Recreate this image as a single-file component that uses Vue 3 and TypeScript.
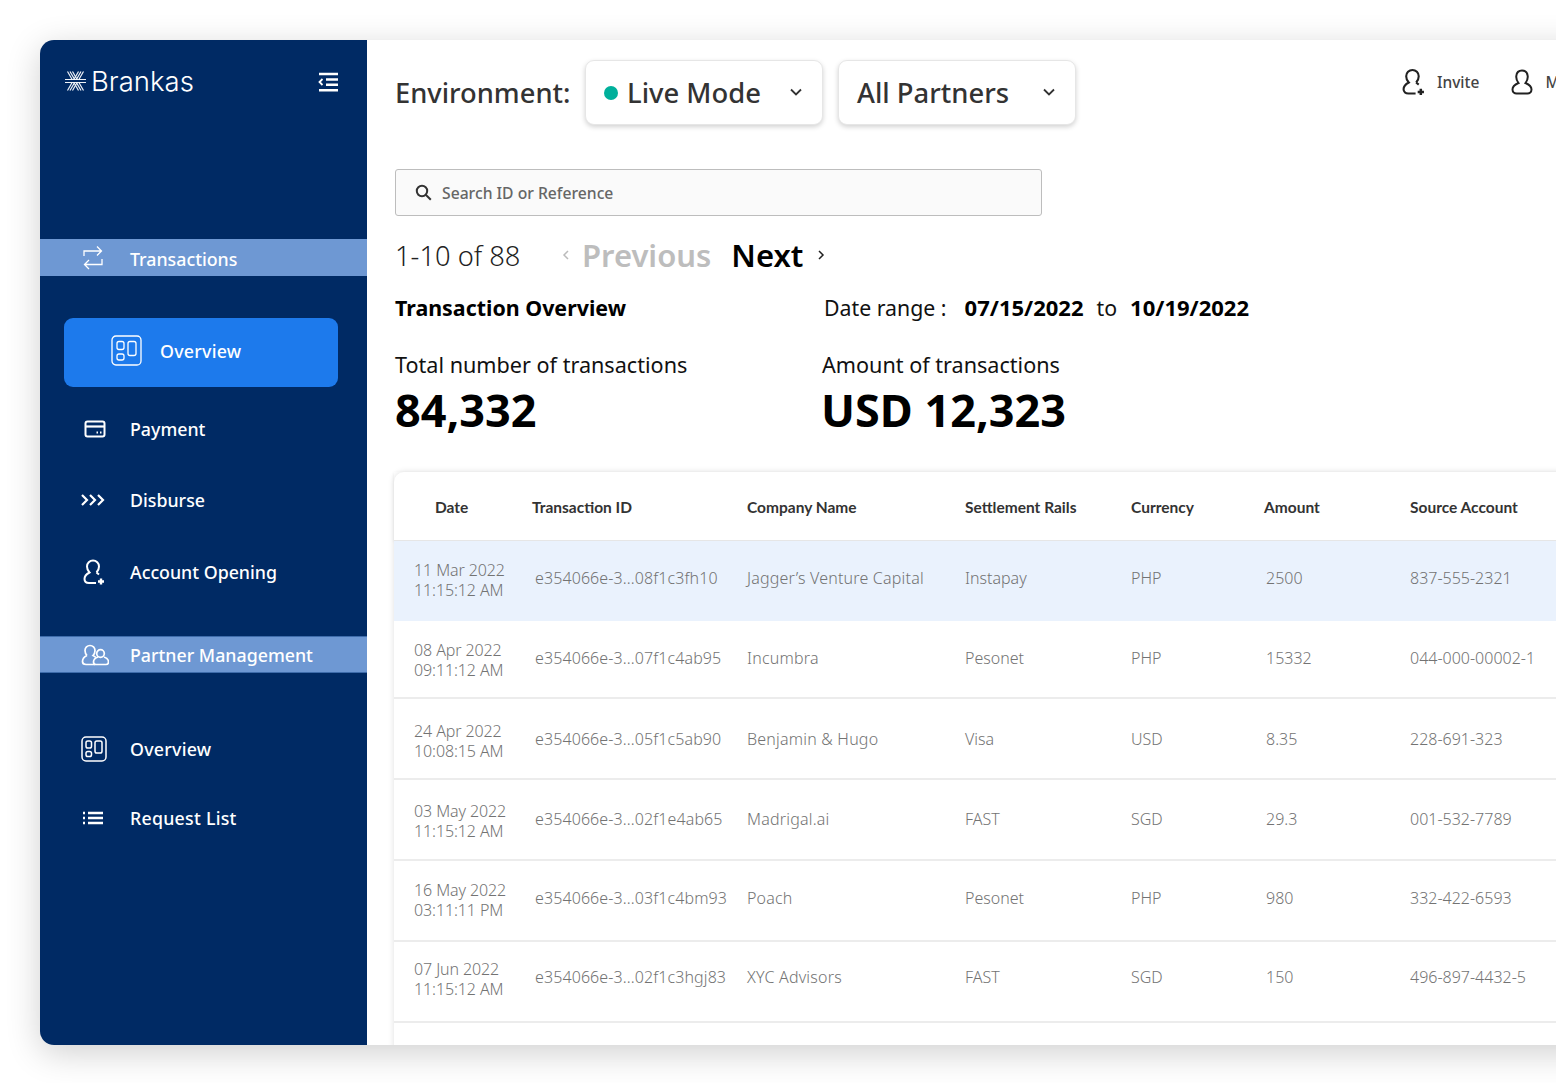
<script setup lang="ts">
interface Row { date: string; time: string; id: string; company: string; rail: string; cur: string; amount: string; account: string; height: number; shift: number; active?: boolean }
const headers = ['Date', 'Transaction ID', 'Company Name', 'Settlement Rails', 'Currency', 'Amount', 'Source Account']
const rows: Row[] = [
  { date: '11 Mar 2022', time: '11:15:12 AM', id: 'e354066e-3...08f1c3fh10', company: 'Jagger’s Venture Capital', rail: 'Instapay', cur: 'PHP', amount: '2500', account: '837-555-2321', height: 80, shift: 3, active: true },
  { date: '08 Apr 2022', time: '09:11:12 AM', id: 'e354066e-3...07f1c4ab95', company: 'Incumbra', rail: 'Pesonet', cur: 'PHP', amount: '15332', account: '044-000-00002-1', height: 78, shift: 1 },
  { date: '24 Apr 2022', time: '10:08:15 AM', id: 'e354066e-3...05f1c5ab90', company: 'Benjamin & Hugo', rail: 'Visa', cur: 'USD', amount: '8.35', account: '228-691-323', height: 81, shift: 0 },
  { date: '03 May 2022', time: '11:15:12 AM', id: 'e354066e-3...02f1e4ab65', company: 'Madrigal.ai', rail: 'FAST', cur: 'SGD', amount: '29.3', account: '001-532-7789', height: 81, shift: 1 },
  { date: '16 May 2022', time: '03:11:11 PM', id: 'e354066e-3...03f1c4bm93', company: 'Poach', rail: 'Pesonet', cur: 'PHP', amount: '980', account: '332-422-6593', height: 81, shift: 3 },
  { date: '07 Jun 2022', time: '11:15:12 AM', id: 'e354066e-3...02f1c3hgj83', company: 'XYC Advisors', rail: 'FAST', cur: 'SGD', amount: '150', account: '496-897-4432-5', height: 81, shift: 5 },
]
</script>

<template>
  <div class="page">
    <div class="window">
      <aside class="sidebar">
        <div class="brand">
          <div class="logo">
            <svg width="23" height="22" viewBox="0 0 23 22" fill="none" stroke="#eef2f7" stroke-width="1.200">
              <path d="M3.500 1.500l11 19M6 1.500l11 19M8.500 1.500l11 19" />
              <path d="M19.500 1.500l-11 19M17 1.500l-11 19M14.500 1.500l-11 19" />
              <rect x="1" y="9" width="21" height="4" fill="#002a64" stroke="none" />
              <path d="M1 9.500h21M1 12.500h21" />
            </svg>
            <span>Brankas</span>
          </div>
          <svg class="collapse" width="22" height="20" viewBox="0 0 22 20" fill="none" stroke="#fff" stroke-width="2.400">
            <path d="M2 2h19M9 7.500h12M9 12.800h12M2 18.200h19" />
            <path d="M5.500 7L2.500 10l3 3" stroke-width="1.800" />
          </svg>
        </div>

        <div class="band band-first">
          <svg class="ico" width="22" height="26" viewBox="0 0 22 26" fill="none" stroke="#fff" stroke-width="1.300">
            <path d="M2 11V6h17M15 1.500L19.500 6 15 10.500" />
            <path d="M20 14v5.500H3M7 15L2.500 19.500 7 24" />
          </svg>
          <span>Transactions</span>
        </div>

        <div class="pill">
          <svg width="32" height="32" viewBox="0 0 32 32" fill="none" stroke="#fff" stroke-width="1.300">
            <rect x="1" y="1" width="29" height="29" rx="4" />
            <rect x="6" y="6.500" width="7" height="8" rx="2" />
            <rect x="6" y="19" width="7" height="6" rx="2" />
            <rect x="17" y="6.500" width="8" height="14" rx="2" />
          </svg>
          <span>Overview</span>
        </div>

        <div class="nav nav-pay">
          <svg class="ico" width="22" height="18" viewBox="0 0 22 18" fill="none" stroke="#fff" stroke-width="2">
            <rect x="1.500" y="1.500" width="19" height="15" rx="2" />
            <path d="M1.500 6.500h19" stroke-width="2.200" />
            <path d="M12.500 12.500h1.500M16 12.500h1.500" stroke-width="2" />
          </svg>
          <span>Payment</span>
        </div>
        <div class="nav nav-dis">
          <svg class="ico" width="26" height="16" viewBox="0 0 26 16" fill="none" stroke="#fff" stroke-width="2.200">
            <path d="M2 3l5 5-5 5M10 3l5 5-5 5M18 3l5 5-5 5" />
          </svg>
          <span>Disburse</span>
        </div>
        <div class="nav nav-acct">
          <svg class="ico" width="22" height="26" viewBox="0 0 22 26" fill="none" stroke="#fff" stroke-width="2">
            <path d="M13.500 13.500C15 12 16 10 16 7.500a6 6 0 0 0-12 0C4 10 5 12 6.500 13.500 3.500 15 1.500 17 1.500 20c0 2.500 2 4 4.500 4h7" />
            <path d="M13.500 13.500l2.500 2" />
            <path d="M15 22.500h6M18 19.500v6" stroke-width="2.400" />
          </svg>
          <span>Account Opening</span>
        </div>

        <div class="band band-second">
          <svg class="ico" width="28" height="22" viewBox="0 0 28 22" fill="none" stroke="#fff" stroke-width="1.700">
            <path d="M6 11.500C4.500 10 4 8.500 4 6.500a5 5 0 0 1 10 0c0 2-.5 3.500-2 5 1 .5 2 1.200 2.800 2" />
            <path d="M6 11.500C3 12.800 1.500 15 1.500 17.500c0 2 1.500 3 3.500 3h9" />
            <circle cx="19.500" cy="9.500" r="3.800" />
            <path d="M17 13c-3 1-4.500 3-4.500 5 0 1.500 1 2.500 2.500 2.500h10c1.500 0 2.500-1 2.500-2.500 0-2-1.500-4-4.500-5" />
          </svg>
          <span>Partner Management</span>
        </div>

        <div class="nav nav-over">
          <svg class="ico" width="26" height="26" viewBox="0 0 26 26" fill="none" stroke="#fff" stroke-width="1.500">
            <rect x="1" y="1" width="24" height="24" rx="4" />
            <rect x="5" y="5" width="5.500" height="7" rx="1.800" />
            <rect x="5" y="15.500" width="5.500" height="5" rx="1.800" />
            <rect x="14" y="5" width="7" height="12" rx="1.800" />
          </svg>
          <span>Overview</span>
        </div>
        <div class="nav nav-req">
          <svg class="ico" width="22" height="14" viewBox="0 0 22 14" fill="none" stroke="#fff" stroke-width="2.400">
            <path d="M6 2h15M6 7h15M6 12h15" />
            <path d="M1 2h2M1 7h2M1 12h2" />
          </svg>
          <span>Request List</span>
        </div>
      </aside>

      <main class="main">
        <div class="topbar">
          <span class="env">Environment:</span>
          <button class="select">
            <span class="select-label"><i class="dot"></i>Live Mode</span>
            <svg width="14" height="9" viewBox="0 0 14 9" fill="none" stroke="#333" stroke-width="1.800"><path d="M2 1.500l5 5 5-5" /></svg>
          </button>
          <button class="select">
            <span class="select-label">All Partners</span>
            <svg width="14" height="9" viewBox="0 0 14 9" fill="none" stroke="#333" stroke-width="1.800"><path d="M2 1.500l5 5 5-5" /></svg>
          </button>
          <div class="actions">
            <svg width="23" height="28" viewBox="0 0 22 26" fill="none" stroke="#222" stroke-width="2">
              <path d="M13.500 13.500C15 12 16 10 16 7.500a6 6 0 0 0-12 0C4 10 5 12 6.500 13.500 3.500 15 1.500 17 1.500 20c0 2.500 2 4 4.500 4h7" />
              <path d="M13.500 13.500l2.500 2" />
              <path d="M15 22.500h6M18 19.500v6" stroke-width="2.400" />
            </svg>
            <span class="invite">Invite</span>
            <svg class="me" width="22" height="26" viewBox="0 0 22 26" fill="none" stroke="#222" stroke-width="2">
              <path d="M7.500 14C5.500 11.500 5 10 5.300 7 5.700 3.300 8 1.500 11 1.500s5.300 1.800 5.700 5.500c.3 3-.2 4.500-2.200 7 3.500 1.500 6 3.500 6 6.500 0 2.500-2 4-4 4h-11c-2 0-4-1.500-4-4 0-3 2.500-5 6-6.500z" />
            </svg>
            <span class="invite me-label">Me</span>
          </div>
        </div>

        <div class="search">
          <svg width="17" height="17" viewBox="0 0 17 17" fill="none" stroke="#333" stroke-width="2">
            <circle cx="7" cy="7" r="5.200" />
            <path d="M11 11l4.800 4.800" />
          </svg>
          <span>Search ID or Reference</span>
        </div>

        <div class="pager">
          <span class="count">1-10 of 88</span>
          <svg class="chev-l" width="8" height="10" viewBox="0 0 8 10" fill="none" stroke="#bbb" stroke-width="1.500"><path d="M6 1L2 5l4 4" /></svg>
          <span class="prev">Previous</span>
          <span class="next">Next</span>
          <svg class="chev-r" width="8" height="10" viewBox="0 0 8 10" fill="none" stroke="#222" stroke-width="1.500"><path d="M2 1l4 4-4 4" /></svg>
        </div>

        <div class="summary">
          <div class="summary-col">
            <h2 class="ov-title">Transaction Overview</h2>
            <div class="stat-label">Total number of transactions</div>
            <div class="stat-value">84,332</div>
          </div>
          <div class="summary-col second">
            <div class="range">
              <span class="range-label">Date range :</span>
              <b class="from">07/15/2022</b>
              <span class="to">to</span>
              <b>10/19/2022</b>
            </div>
            <div class="stat-label">Amount of transactions</div>
            <div class="stat-value">USD 12,323</div>
          </div>
        </div>

        <div class="table">
          <div class="thead">
            <div v-for="h in headers" :key="h" class="th">{{ h }}</div>
          </div>
          <div
            v-for="r in rows"
            :key="r.id"
            class="tr"
            :class="{ active: r.active }"
            :style="{ height: r.height + 'px', paddingBottom: r.shift * 2 + 'px' }"
          >
            <div class="td date"><div>{{ r.date }}</div><div>{{ r.time }}</div></div>
            <div class="td idc">{{ r.id }}</div>
            <div class="td company">{{ r.company }}</div>
            <div class="td">{{ r.rail }}</div>
            <div class="td">{{ r.cur }}</div>
            <div class="td amt">{{ r.amount }}</div>
            <div class="td">{{ r.account }}</div>
          </div>
        </div>
      </main>
    </div>
  </div>
</template>

<style>
html, body { margin: 0; background: #fff; overflow: hidden; }
</style>

<style scoped>
.page {
  width: 1556px;
  height: 1083px;
  overflow: hidden;
  position: relative;
  box-sizing: border-box;
  padding: 40px 0 0 40px;
  font-family: "Noto Sans", sans-serif;
}
.window {
  width: 1600px;
  height: 1005px;
  display: flex;
  background: #fff;
  border-radius: 14px 0 0 14px;
  box-shadow: 0 8px 34px rgba(0, 0, 0, 0.19);
  overflow: hidden;
}
.sidebar {
  width: 327px;
  flex: none;
  background: #002a64;
  color: #fff;
  display: flex;
  flex-direction: column;
  font-size: 17.800px;
  font-weight: 500;
}
.brand {
  height: 84px;
  padding: 0 28px 0 24px;
  display: flex;
  align-items: center;
  justify-content: space-between;
}
.logo { display: flex; align-items: center; gap: 4px; font-family: Inter, sans-serif; font-size: 27.500px; font-weight: 300; margin-top: -2px; }
.band {
  height: 37px;
  background: #6e98d3;
  display: flex;
  align-items: center;
}
.band-first { margin-top: 115px; }
.band-first span { padding-top: 2px; }
.band-second { margin-top: 29px; border-top: 1px solid #3e6cab; border-bottom: 1px solid #3e6cab; box-sizing: border-box; }
.band span, .nav span { margin-left: 90px; }
.ico { position: absolute; margin-left: 41px; }
.band, .nav { position: relative; }
.band-first .ico { margin-left: 42px; }
.nav-pay .ico { margin-left: 44px; }
.nav-dis .ico { margin-left: 40px; }
.nav-req .ico { margin-left: 42px; }
.nav-acct .ico { margin-left: 43px; }
.pill {
  margin: 42px 29px 0 24px;
  height: 69px;
  background: #1d7aec;
  border-radius: 9px;
  display: flex;
  align-items: center;
  padding-left: 47px;
  gap: 17px;
}
.pill svg { flex: none; margin-top: -4px; }
.pill span { margin-top: -4px; letter-spacing: 0.25px; }
.nav { height: 71px; display: flex; align-items: center; }
.nav-pay { margin-top: 6px; }
.nav-acct { margin-top: 1px; }
.nav-over { margin-top: 42px; height: 67px; }
.nav-over span, .nav-req span { letter-spacing: 0.25px; }
.main { flex: 1; min-width: 0; padding-left: 28px; color: #222; }
.topbar { height: 86px; padding-top: 20px; display: flex; align-items: flex-start; }
.env { font-size: 27.300px; font-weight: 500; color: #333; line-height: 65px; width: 190px; flex: none; }
.select {
  width: 238px;
  height: 65px;
  margin-right: 15px;
  flex: none;
  box-sizing: border-box;
  background: #fff;
  border: 1px solid #e6e6e6;
  border-radius: 9px;
  box-shadow: 0 2px 5px rgba(0, 0, 0, 0.18);
  display: flex;
  align-items: center;
  justify-content: space-between;
  padding: 0 19px 0 18px;
  font-family: inherit;
  font-size: 27.400px;
  font-weight: 500;
  color: #333;
}
.select-label { display: flex; align-items: center; }
.dot { width: 14px; height: 14px; border-radius: 50%; background: #00b09b; margin-right: 9px; }
.actions { position: relative; margin-left: 311px; margin-top: 7px; display: flex; align-items: center; height: 30px; white-space: nowrap; }
.invite { font-size: 15.500px; font-weight: 500; color: #444; margin-left: 12px; }
.me { margin-left: 32px; }
.search {
  margin-top: 23px;
  width: 647px;
  height: 47px;
  box-sizing: border-box;
  background: #fafafa;
  border: 1px solid #bdbdbd;
  border-radius: 3px;
  display: flex;
  align-items: center;
  padding-left: 19px;
  gap: 10px;
  font-size: 15.700px;
  font-weight: 500;
  color: #666;
}
.pager { display: flex; align-items: center; height: 40px; margin-top: 19px; white-space: nowrap; }
.count { font-size: 27.300px; font-weight: 300; color: #222; width: 167px; }
.prev { font-size: 31px; font-weight: 600; color: #bdbdbd; margin-left: 12px; }
.next { font-size: 31px; font-weight: 600; color: #000; margin-left: 20px; }
.chev-r { margin-left: 14px; }
.summary { display: flex; margin-top: 17px; }
.summary-col { width: 427px; flex: none; }
.ov-title { margin: 0; font-size: 21.400px; line-height: 32px; font-weight: 700; color: #000; }
.range { display: flex; align-items: center; gap: 13px; height: 30px; margin-left: 2px; font-size: 21.300px; color: #111; white-space: nowrap; }
.range b { font-size: 22px; font-weight: 700; color: #000; }
.range .from { margin-left: 5px; }
.stat-label { margin-top: 25px; font-size: 21.600px; line-height: 32px; color: #111; white-space: nowrap; }
.second .stat-label { margin-top: 27px; }
.stat-value { font-size: 45px; line-height: 58px; font-weight: 700; color: #000; white-space: nowrap; }
.second .stat-value { margin-left: -1px; }
.table {
  margin-top: 33px;
  margin-left: -1px;
  border-radius: 10px 0 0 0;
  box-shadow: 0 0 6px rgba(0, 0, 0, 0.13);
  background: #fff;
  height: 600px;
}
.thead, .tr { display: grid; grid-template-columns: 138px 215px 218px 166px 133px 146px 1fr; align-items: center; }
.thead { height: 68px; border-bottom: 1px solid #e6e6e6; box-shadow: 0 1px 3px rgba(0,0,0,.08); }
.th { font-family: Lato, sans-serif; font-size: 15.500px; font-weight: 700; color: #333; white-space: nowrap; padding-top: 2px; }
.th:first-child { padding-left: 41px; }
.tr { box-sizing: border-box; border-bottom: 2px solid #ececec; }
.tr.active { background: #eaf2fd; border-bottom: 0; }
.td { font-size: 16px; font-weight: 300; line-height: 20px; color: #737373; white-space: nowrap; }
.date { padding-left: 20px; padding-top: 4px; letter-spacing: -0.1px; }
.idc { padding-left: 3px; letter-spacing: 0.1px; }
.company { letter-spacing: 0.2px; }
.amt { padding-left: 2px; }
</style>
